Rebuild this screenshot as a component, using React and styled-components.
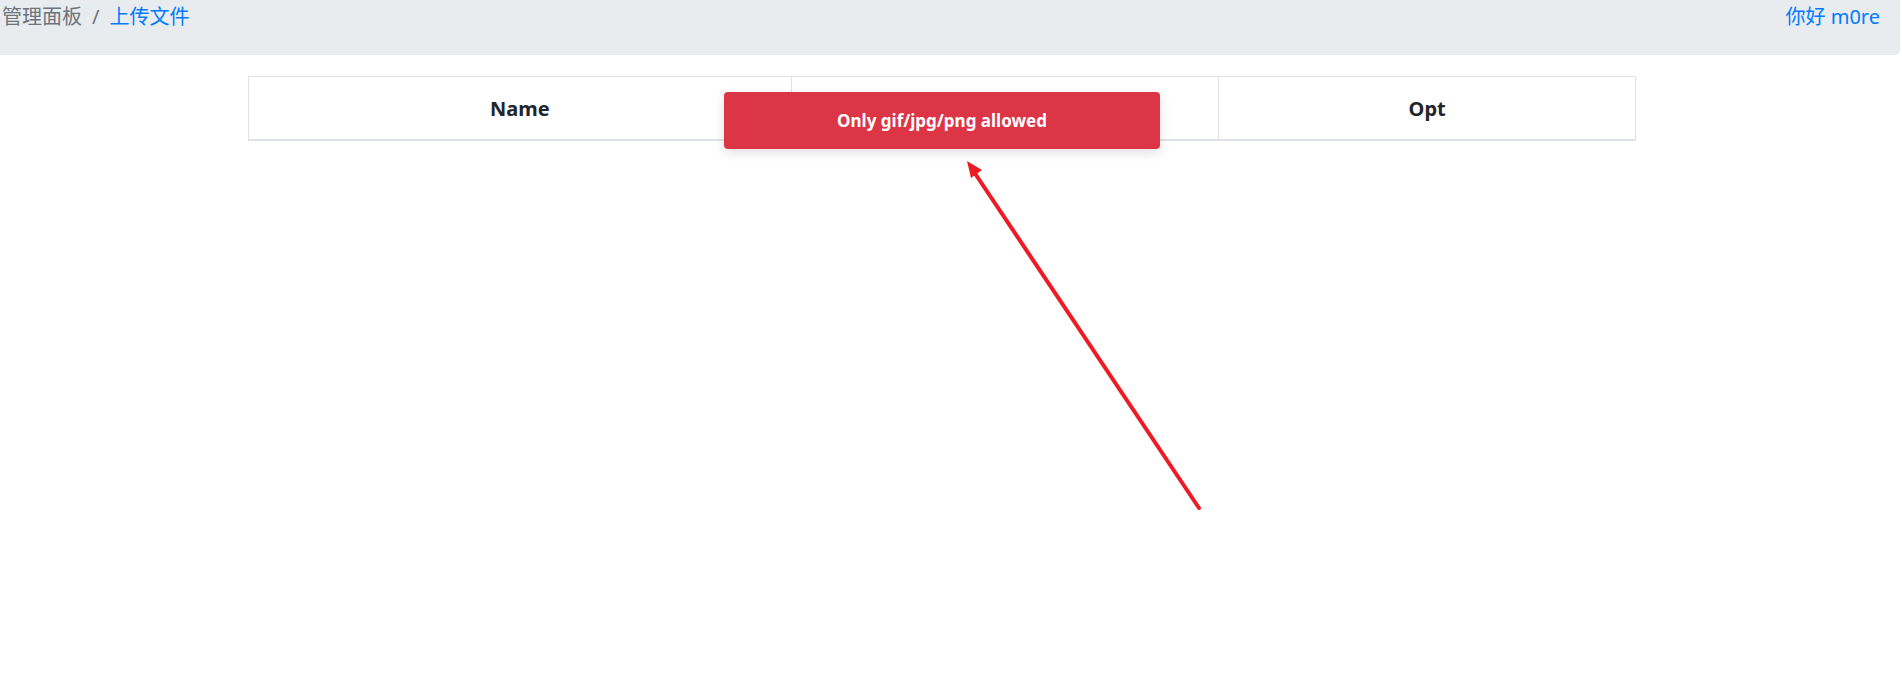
import { createGlobalStyle, styled } from 'styled-components';

const GlobalStyle = createGlobalStyle`
  html, body {
    margin: 0;
    padding: 0;
    background: #fff;
  }
  body {
    font-family: "Noto Sans", "Noto Sans CJK SC", sans-serif;
    font-size: 20px;
    line-height: 1.5;
    color: #212529;
  }
`;

// middle header is hidden under the toast in the screenshot
const columns = [
  { key: 'name', title: 'Name', width: 543 },
  { key: 'mid', title: '', width: 428 },
  { key: 'opt', title: 'Opt', width: 417 },
];

function App() {
  return (
    <>
      <GlobalStyle />
      <Breadcrumb>
        <Trail>
          <Crumb>管理面板</Crumb>
          <Separator>/</Separator>
          <Crumb $active>上传文件</Crumb>
        </Trail>
        <Greeting>你好 m0re</Greeting>
      </Breadcrumb>
      <FileTable>
        <thead>
          <tr>
            {columns.map((c) => (
              <HeadCell key={c.key} style={{ width: c.width }}>
                {c.title}
              </HeadCell>
            ))}
          </tr>
        </thead>
      </FileTable>
      <Toast>Only gif/jpg/png allowed</Toast>
      <Annotation width="260" height="360" viewBox="0 0 260 360">
        <line x1="249" y1="356" x2="22" y2="17" stroke="#ed1c24" strokeWidth="4" strokeLinecap="round" />
        <polygon points="17,9 32,18 21,26" fill="#ed1c24" />
      </Annotation>
    </>
  );
}
export default App;

export const Breadcrumb = styled.nav`
  display: flex;
  justify-content: space-between;
  align-items: flex-start;
  box-sizing: border-box;
  width: 1900px;
  height: 55px;
  padding: 2px 20px 0 2px;
  background-color: #e9ecef;
  border-radius: 0 0 5px 0;
`;

export const Trail = styled.div`
  display: flex;
`;

export const Crumb = styled.span`
  color: ${(p) => (p.$active ? '#007bff' : '#6c757d')};
`;

export const Separator = styled.span`
  padding: 0 10px;
  color: #6c757d;
`;

export const Greeting = styled.span`
  color: #007bff;
`;

export const FileTable = styled.table`
  width: 1388px;
  margin: 21px 0 0 248px;
  border-collapse: collapse;
`;

export const HeadCell = styled.th`
  box-sizing: border-box;
  height: 63px;
  padding: 16px 15px 14px;
  border: 1px solid #dee2e6;
  border-bottom: 2px solid #dee2e6;
  font-weight: 700;
  text-align: center;
  vertical-align: middle;
`;

export const Toast = styled.div`
  position: absolute;
  left: 724px;
  top: 92px;
  width: 436px;
  height: 57px;
  display: flex;
  align-items: center;
  justify-content: center;
  background-color: #dc3545;
  color: #fff;
  font-size: 17px;
  font-weight: 700;
  border-radius: 4px;
  box-shadow: 0 4px 12px rgba(0, 0, 0, 0.12);
`;

export const Annotation = styled.svg`
  position: absolute;
  left: 950px;
  top: 152px;
`;
